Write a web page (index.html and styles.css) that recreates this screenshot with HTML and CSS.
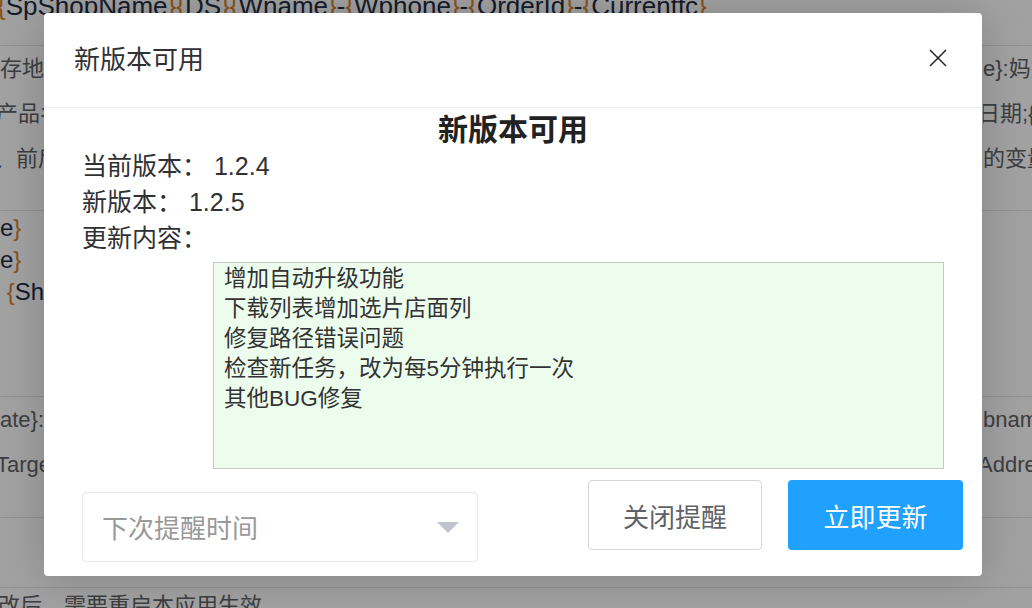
FILE: index.html
```html
<!DOCTYPE html>
<html lang="zh-CN">
<head>
<meta charset="utf-8">
<title>新版本可用</title>
<link rel="stylesheet" href="styles.css">
</head>
<body>
<div class="page">
  <div class="bg">
    <div class="code-top"><span class="b">{</span>SpShopName<span class="b">}{</span>DS<span class="b">}{</span>Wname<span class="b">}</span>-<span class="b">{</span>Wphone<span class="b">}</span>-<span class="b">{</span>OrderId<span class="b">}</span>-<span class="b">{</span>Currentfc<span class="b">}</span></div>
    <div class="sep sep-1"></div>
    <div class="rows rows-a">
      <div class="row"><span class="l">存地址：用于设置文件保存的目录</span><span class="r">e}:妈妈宝贝</span></div>
      <div class="row"><span class="l in-4">产品名称：{ProductName}</span><span class="r in-5">日期;{ShootDate}</span></div>
      <div class="row"><span class="l in-6">、前后缀可以使用以下的变量</span><span class="r">的变量名称</span></div>
    </div>
    <div class="sep sep-2"></div>
    <div class="codes">
      <div class="code">e<span class="b">}</span></div>
      <div class="code">e<span class="b">}</span></div>
      <div class="code"> <span class="b">{</span>ShopName<span class="b">}</span></div>
    </div>
    <div class="sep sep-3"></div>
    <div class="rows rows-b">
      <div class="row"><span class="l">ate}:这是拍摄日期</span><span class="r">bname}</span></div>
      <div class="row"><span class="l in-4">Target}:目标地址</span><span class="r in-5">Address}</span></div>
    </div>
    <div class="sep sep-4"></div>
    <div class="sep sep-5"></div>
    <div class="note">改后，需要重启本应用生效</div>
  </div>
  <div class="overlay"></div>

  <div class="dialog">
    <div class="dlg-head">
      <span class="dlg-title">新版本可用</span>
      <span class="dlg-close">
        <svg width="18" height="18" viewBox="0 0 18 18"><path d="M1 1 L17 17 M17 1 L1 17" stroke="#222" stroke-width="1.5" fill="none"/></svg>
      </span>
    </div>
    <div class="dlg-body">
      <div class="dlg-heading">新版本可用</div>
      <div class="info">当前版本： 1.2.4</div>
      <div class="info">新版本： 1.2.5</div>
      <div class="info">更新内容：</div>
      <div class="notes">
        <div>增加自动升级功能</div>
        <div>下载列表增加选片店面列</div>
        <div>修复路径错误问题</div>
        <div>检查新任务，改为每5分钟执行一次</div>
        <div>其他BUG修复</div>
      </div>
      <div class="actions">
        <div class="select">
          <span class="placeholder">下次提醒时间</span>
          <span class="caret"></span>
        </div>
        <div class="btns">
          <div class="btn btn-plain">关闭提醒</div>
          <div class="btn btn-primary">立即更新</div>
        </div>
      </div>
    </div>
  </div>
</div>
</body>
</html>
```
FILE: styles.css
```css
* { box-sizing: border-box; }
html, body { margin: 0; padding: 0; }
body {
  font-family: "Liberation Sans", "Noto Sans CJK SC", sans-serif;
}
.page {
  position: relative;
  width: 1032px;
  height: 608px;
  overflow: hidden;
  background: #ffffff;
}

/* background page */
.bg { color: #5f6266; }
.code-top {
  margin-top: -9px;
  margin-left: -3px;
  font-size: 26px;
  line-height: 30px;
  white-space: nowrap;
  color: #1f2d45;
}
.b { color: #d9822b; }
.sep { height: 1px; background: #e2e2e2; }
.sep-1 { margin-top: 24px; }
.sep-2 { margin-top: 29px; }
.sep-3 { margin-top: 88px; }
.sep-4 { margin-top: 30px; }
.sep-5 { margin-top: 69px; }
.rows { display: flex; flex-direction: column; }
.row {
  display: grid;
  grid-template-columns: 983px 1fr;
  height: 45px;
  line-height: 45px;
  font-size: 22px;
  white-space: nowrap;
  overflow: hidden;
}
.row .l, .row .r { overflow: hidden; display: block; }
.in-4 { text-indent: -4px; }
.in-5 { text-indent: -5px; }
.in-6 { text-indent: -6px; }
.codes { margin-top: 1px; }
.code {
  height: 32px;
  line-height: 32px;
  font-size: 24px;
  white-space: pre;
  color: #1f2d45;
}
.note {
  margin-left: -2px;
  height: 36px;
  line-height: 36px;
  font-size: 22px;
  white-space: nowrap;
}
.overlay {
  position: absolute;
  inset: 0;
  background: rgba(0, 0, 0, 0.37);
}

/* dialog */
.dialog {
  position: absolute;
  left: 44px;
  top: 13px;
  width: 938px;
  height: 563px;
  background: #ffffff;
  border-radius: 4px;
  box-shadow: 0 2px 40px rgba(0, 0, 0, 0.18);
  display: flex;
  flex-direction: column;
}
.dlg-head {
  height: 95px;
  flex: none;
  border-bottom: 1px solid #ebeef5;
  display: flex;
  align-items: center;
  justify-content: space-between;
  padding: 0 35px 0 30px;
}
.dlg-title {
  font-size: 26px;
  line-height: 36px;
  color: #303133;
}
.dlg-close {
  display: flex;
  width: 18px;
  height: 18px;
  margin-top: -4px;
}
.dlg-body {
  padding: 4px 19px 0 38px;
  color: #303133;
}
.dlg-heading {
  text-align: center;
  font-size: 30px;
  line-height: 36px;
  font-weight: bold;
  color: #222;
  margin-right: -19px;
  margin-left: -38px;
}
.info {
  font-size: 25px;
  line-height: 36px;
}
.notes {
  margin-top: 6px;
  margin-left: 131px;
  width: 731px;
  height: 207px;
  border: 1px solid #c8c8c8;
  background: #edfded;
  padding: 1px 10px;
  font-size: 22.5px;
  line-height: 30px;
  color: #333;
}
.actions {
  margin-top: 11px;
  display: flex;
  align-items: flex-start;
  justify-content: space-between;
}
.select {
  margin-top: 12px;
  width: 396px;
  height: 70px;
  border: 1px solid #e6e8ec;
  border-radius: 4px;
  display: flex;
  align-items: center;
  justify-content: space-between;
  padding: 0 18px 2px 19px;
}
.placeholder {
  font-size: 26px;
  color: #999999;
}
.caret {
  width: 0;
  height: 0;
  margin-top: 2px;
  border-left: 11px solid transparent;
  border-right: 11px solid transparent;
  border-top: 11px solid #c0c4cc;
}
.btns {
  display: flex;
  gap: 26px;
}
.btn {
  height: 70px;
  border-radius: 4px;
  display: flex;
  align-items: center;
  justify-content: center;
  font-size: 26px;
}
.btn-plain {
  width: 174px;
  border: 1px solid #d4d6db;
  color: #606266;
  background: #fff;
}
.btn-primary {
  width: 175px;
  background: #20a0ff;
  color: #ffffff;
}
```
